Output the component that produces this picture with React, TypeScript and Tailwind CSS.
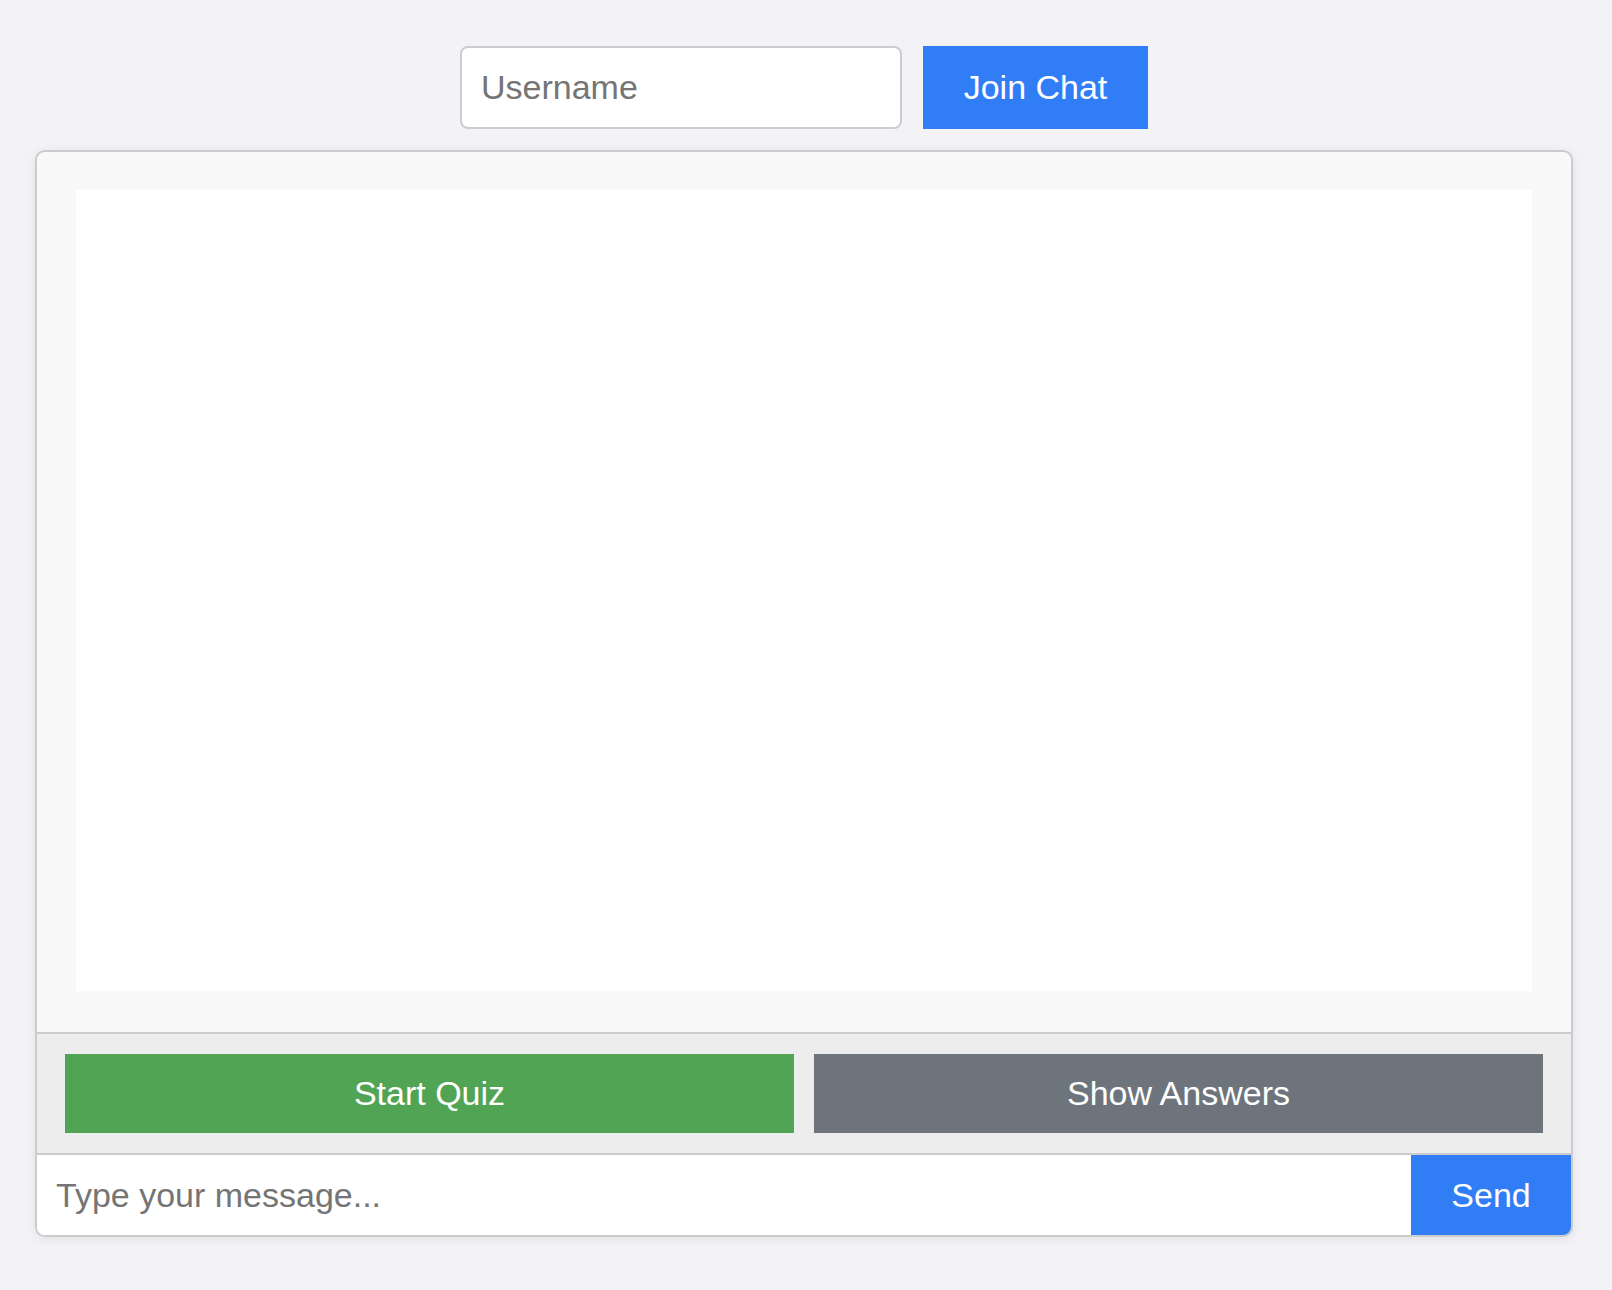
import React, { useState } from "react";

const App = () => {
  const [username, setUsername] = useState("");
  const [message, setMessage] = useState("");

  return (
    <div className="min-h-[1290px] w-full bg-[#f3f3f7] pt-[46px] pr-[4px] font-['Liberation_Sans',Arial,sans-serif]">
      {/* join row */}
      <div className="flex justify-center gap-[21px]">
        <input
          value={username}
          onChange={(e) => setUsername(e.target.value)}
          placeholder="Username"
          type="text"
          className="h-[83px] w-[442px] rounded-[8px] border-2 border-[#cccccc] bg-white px-[19px] text-[34px] text-[#333] placeholder:text-[#757575] outline-none"
        />
        <button className="h-[83px] w-[225px] bg-[#307df6] text-[34px] text-white">Join Chat</button>
      </div>

      {/* chat box */}
      <div className="mx-auto mt-[21px] w-[1538px] overflow-hidden rounded-[10px] border-2 border-[#cccccc] bg-[#f9f9f9] shadow-[0_2px_10px_rgba(0,0,0,0.08)]">
        <div className="px-[39px] pt-[38px] pb-[41px]">
          <div className="h-[801px] w-full bg-white"></div>
        </div>

        <div className="flex gap-[20px] border-t-2 border-[#cccccc] bg-[#ededed] px-[28px] py-[20px]">
          <button className="h-[79px] flex-1 bg-[#51a453] text-[34px] text-white">Start Quiz</button>
          <button className="h-[79px] flex-1 bg-[#6e747c] text-[34px] text-white">Show Answers</button>
        </div>

        <div className="flex h-[82px] border-t-2 border-[#cccccc] bg-white">
          <input
            value={message}
            onChange={(e) => setMessage(e.target.value)}
            placeholder="Type your message..."
            type="text"
            className="h-full flex-1 bg-white px-[19px] text-[34px] text-[#333] placeholder:text-[#757575] outline-none"
          />
          <button className="h-full w-[160px] bg-[#307df6] text-[34px] text-white">Send</button>
        </div>
      </div>
    </div>
  );
};

export default App;
